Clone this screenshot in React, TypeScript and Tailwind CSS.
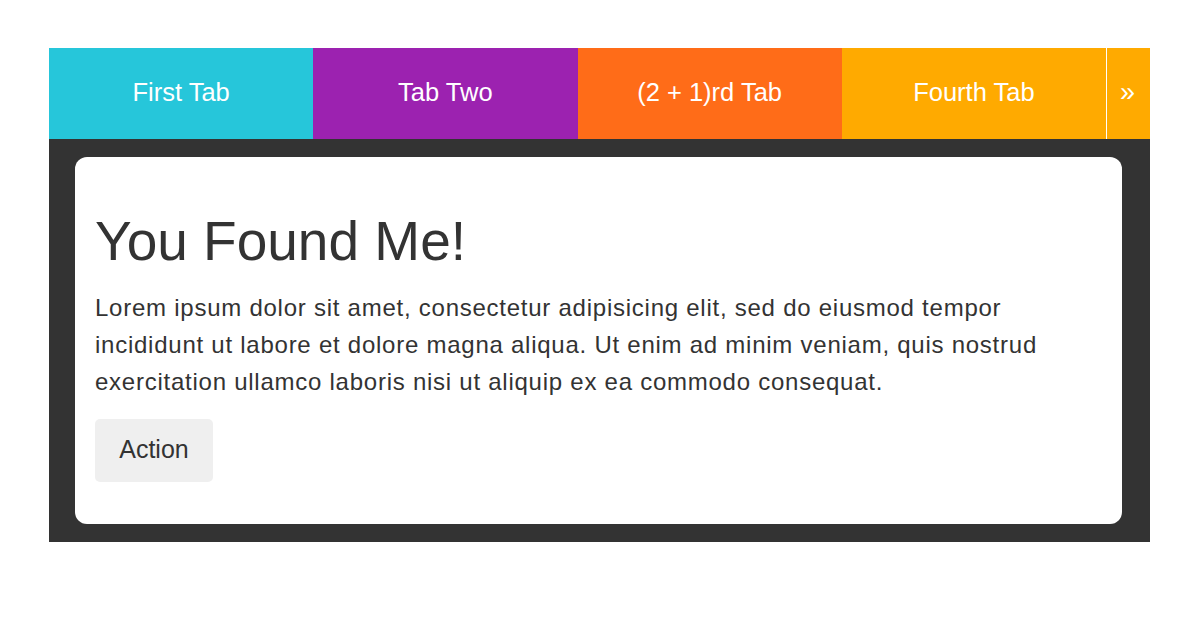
import React from "react";

const tabs = [
  { label: "First Tab", bg: "bg-[#26c6da]" },
  { label: "Tab Two", bg: "bg-[#9c22b0]" },
  { label: "(2 + 1)rd Tab", bg: "bg-[#ff6c18]" },
  { label: "Fourth Tab", bg: "bg-[#ffaa00]" },
];

export default function App() {
  return (
    <div
      className="w-[1200px] h-[628px] bg-white pt-[48px] pl-[49px]"
      style={{ fontFamily: '"Liberation Sans", Arial, sans-serif' }}
    >
      <div className="w-[1101px]">
        <div className="flex h-[91px]">
          {tabs.map((t) => (
            <div
              key={t.label}
              className={`flex-1 flex items-center justify-center pb-[3px] text-white text-[25.5px] ${t.bg}`}
            >
              {t.label}
            </div>
          ))}
          <div className="w-[44px] border-l border-white bg-[#ffaa00] flex items-center justify-center pb-[3px] pr-[2px] text-white text-[27px]">
            »
          </div>
        </div>
        <div className="bg-[#333333] pt-[18px] pb-[18px] pl-[26px] pr-[28px]">
          <div className="bg-white rounded-[12px] pt-[54px] px-[20px] pb-[42px] text-[#333333]">
            <h1 className="text-[55px] leading-[1.1]">You Found Me!</h1>
            <p className="mt-[17px] text-[24px] leading-[37px] tracking-[0.75px]">
              Lorem ipsum dolor sit amet, consectetur adipisicing elit, sed do eiusmod tempor
              incididunt ut labore et dolore magna aliqua. Ut enim ad minim veniam, quis nostrud
              exercitation ullamco laboris nisi ut aliquip ex ea commodo consequat.
            </p>
            <button className="mt-[19px] h-[63px] w-[118px] rounded-[5px] bg-[#efefef] text-[25px] text-[#333333] flex items-center justify-center">
              Action
            </button>
          </div>
        </div>
      </div>
    </div>
  );
}
